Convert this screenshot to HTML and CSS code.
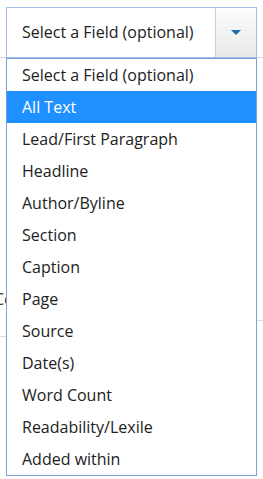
FILE: index.html
```html
<!DOCTYPE html>
<html lang="en">
<head>
    <meta charset="UTF-8">
    <meta name="viewport" content="width=device-width, initial-scale=1.0">
    <title>Field select</title>
    <link rel="stylesheet" href="styles.css">
</head>
<body>

<div class="page">
    <!-- content behind the open dropdown -->
    <div class="form-row"></div>
    <div class="behind-label">Co</div>
    <div class="rule rule-right"></div>
    <div class="rule rule-left"></div>

    <div class="picker">
        <div class="select-box">
            <span class="select-text">Select a Field (optional)</span>
            <span class="select-arrow">
                <svg width="10" height="5" viewBox="0 0 10 5"><path d="M0 0h10L5 5z" fill="#1a6fb0"/></svg>
            </span>
        </div>

        <ul class="options">
            <li>Select a Field (optional)</li>
            <li class="active">All Text</li>
            <li>Lead/First Paragraph</li>
            <li>Headline</li>
            <li>Author/Byline</li>
            <li>Section</li>
            <li>Caption</li>
            <li>Page</li>
            <li>Source</li>
            <li>Date(s)</li>
            <li>Word Count</li>
            <li>Readability/Lexile</li>
            <li>Added within</li>
        </ul>
    </div>
</div>

</body>
</html>
```

FILE: styles.css
```css
body {
    margin: 0;
    padding: 0;
    background-color: #fff;
    font-family: "Open Sans", "Noto Sans", sans-serif;
    font-size: 16px;
    color: #222;
}

.page {
    position: relative;
    height: 479px;
    overflow: hidden;
}

.form-row {
    height: 57px;
    border-bottom: 1px solid #d8d8d8;
}

.behind-label {
    margin-top: 230px;
    margin-left: -6px;
    line-height: 22px;
    color: #444;
}

.rule {
    height: 0;
    border-top: 1px solid #dcdcdc;
}

.rule-right {
    margin-top: 10px;
    margin-left: 150px;
}

.rule-left {
    margin-top: 15px;
    width: 120px;
}

/* the dropdown sits over the page */
.picker {
    position: absolute;
    top: 7px;
    left: 6px;
    width: 251px;
}

.select-box {
    display: flex;
    height: 51px;
    box-sizing: border-box;
    border: 1px solid #a3bce6;
    background-color: #fff;
}

.select-text {
    flex: 1;
    display: flex;
    align-items: center;
    padding-left: 15px;
    padding-bottom: 1px;
}

.select-arrow {
    width: 40px;
    display: flex;
    align-items: center;
    justify-content: center;
    border-left: 1px solid #cfcfcf;
    background: linear-gradient(#fdfdfd, #e9e9e9);
}

.options {
    list-style: none;
    margin: 0;
    padding: 0;
    border: 1px solid #7f9fd8;
    background-color: #fff;
}

.options li {
    height: 32px;
    line-height: 32px;
    padding-left: 15px;
}

.options li.active {
    background-color: #1e90ff;
    color: #fff;
}
```
